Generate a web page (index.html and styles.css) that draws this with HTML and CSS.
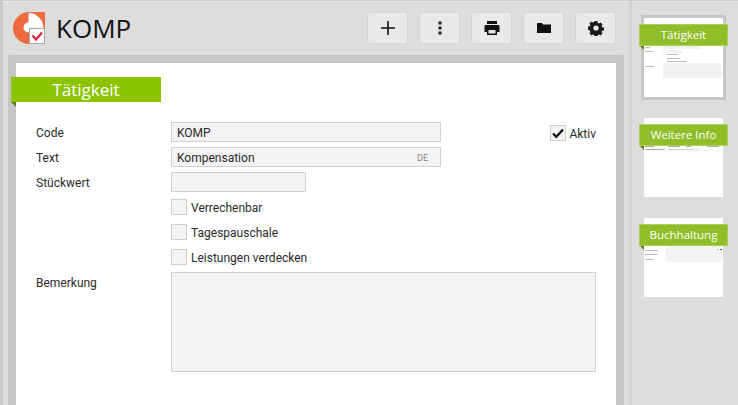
FILE: index.html
```html
<!DOCTYPE html>
<html lang="de">
<head>
<meta charset="utf-8">
<title>KOMP</title>
<link rel="stylesheet" href="styles.css">
</head>
<body>
<div class="app">
  <main class="main">
    <header class="head">
      <svg class="logo" width="33" height="33" viewBox="0 0 33 33">
        <path d="M16 0A16 16 0 1 0 32 16V0Z" fill="#ed6a3e"/>
        <path d="M15.500 1A15 15 0 0 1 30.500 16H20.500A5 5 0 0 0 15.500 11Z" fill="#fff"/>
        <circle cx="15.500" cy="15.500" r="5" fill="#fff"/>
        <rect x="16.500" y="16.500" width="15" height="15" fill="#fbfbfb" stroke="#a9a9a9"/>
        <path d="M19.500 23.500l3.500 4 6-7" fill="none" stroke="#d7263d" stroke-width="2.200"/>
      </svg>
      <h1 class="title">KOMP</h1>
      <div class="tools">
        <button class="tool" aria-label="Neu"><svg width="16" height="16" viewBox="0 0 16 16"><path d="M8 1v14M1 8h14" stroke="#111" stroke-width="1.600"/></svg></button>
        <button class="tool" aria-label="Mehr"><svg width="16" height="16" viewBox="0 0 16 16"><path d="M6.500 1.500h3v3h-3zM6.500 6.500h3v3h-3zM6.500 11.500h3v3h-3z" fill="#222"/></svg></button>
        <button class="tool" aria-label="Drucken"><svg width="16" height="16" viewBox="0 0 16 16"><path d="M3 1h10v3H3zM1.800 5h12.400a1.300 1.300 0 0 1 1.300 1.300V12H13v3H3v-3H.5V6.300A1.300 1.300 0 0 1 1.800 5zM4.500 10v3.500h7V10z" fill="#111" fill-rule="evenodd"/></svg></button>
        <button class="tool" aria-label="Ordner"><svg width="16" height="16" viewBox="0 0 16 16"><path d="M1 3h5l1 1.500h8V13H1z" fill="#111"/></svg></button>
        <button class="tool" aria-label="Einstellungen"><svg width="16" height="16" viewBox="0 0 16 16"><path fill-rule="evenodd" fill="#1a1a1a" d="M6.600 1h2.800l.4 1.900 1.100.5 1.700-1 2 2-1 1.700.5 1.100 1.900.4v2.800l-1.900.4-.5 1.100 1 1.700-2 2-1.700-1-1.100.5-.4 1.900H6.600l-.4-1.900-1.100-.5-1.700 1-2-2 1-1.700-.5-1.100L0 9.400V6.600l1.900-.4.500-1.100-1-1.700 2-2 1.700 1 1.100-.5zM8 5.400a2.600 2.600 0 1 0 0 5.200 2.600 2.600 0 0 0 0-5.200z"/></svg></button>
      </div>
    </header>
    <section class="panel">
      <div class="banner">Tätigkeit</div>
      <form class="form">
        <label class="lbl">Code</label>
        <div class="field">KOMP</div>
        <div class="active"><span class="box"><svg width="14" height="14" viewBox="0 0 14 14"><path d="M2 7.500l3.300 3.300L12 3.500" fill="none" stroke="#111" stroke-width="2.300"/></svg></span><span class="txt">Aktiv</span></div>
        <label class="lbl">Text</label>
        <div class="field field-lang"><span>Kompensation</span><span class="lang">DE</span></div>
        <span></span>
        <label class="lbl">Stückwert</label>
        <div class="field field-short"></div>
        <span></span>
        <div class="check"><span class="box"></span><span class="txt">Verrechenbar</span></div>
        <div class="check"><span class="box"></span><span class="txt">Tagespauschale</span></div>
        <div class="check"><span class="box"></span><span class="txt">Leistungen verdecken</span></div>
        <label class="lbl">Bemerkung</label>
        <div class="area"></div>
      </form>
    </section>
  </main>
  <aside class="side">
    <div class="thumb thumb-on">
      <div class="page">
        <svg width="79" height="79" viewBox="0 0 79 79"><path d="M1 29h5v1H1zM1 33h8v1H1zM1 48h9v1H1z" fill="#bbb"/><path d="M19 28h38v3H19zM19 32h19v3H19zM19 45h59v15H19z" fill="#f2f2f2"/><path d="M23 36h11v1H23zM23 40h13v1H23zM23 43h20v1H23z" fill="#bbb"/></svg>
      </div>
      <div class="tag">Tätigkeit</div>
    </div>
    <div class="thumb">
      <div class="page">
        <svg width="79" height="79" viewBox="0 0 79 79"><path d="M1 28h9v1H1zM24 28h12v1H24zM42 28h5v1h-5zM63 28h12v1H63zM1 31h20v1H1zM24 31h30v1H24z" fill="#aaa"/><path d="M23 30.500h55v3H23z" fill="#f2f2f2" opacity=".6"/></svg>
      </div>
      <div class="tag">Weitere Info</div>
    </div>
    <div class="thumb">
      <div class="page">
        <svg width="79" height="79" viewBox="0 0 79 79"><path d="M22 22h56v22H22z" fill="#f3f3f3"/><path d="M1 27h13v1H1zM1 32h13v1H1zM1 36h12v1H1zM1 41h9v1H1zM73 31h2v1h-2z" fill="#bbb"/><path d="M76 31h2v1h-2z" fill="#666"/></svg>
      </div>
      <div class="tag">Buchhaltung</div>
    </div>
  </aside>
</div>
</body>
</html>
```

FILE: styles.css
```css
* { box-sizing: border-box; }
html, body { margin: 0; height: 100%; overflow: hidden; }
body { background: #ddd; font-family: Roboto, "Open Sans", sans-serif; font-size: 12px; color: #2a2a2a; }
.app { display: flex; height: 405px; border-top: 1px solid #ccc; box-shadow: inset 0 1px 0 #e8e8e8; }
.main { width: 632px; border-left: 3px solid #c9c9c9; border-right: 3px solid #d3d3d3; padding-left: 5px; padding-right: 5px; display: flex; flex-direction: column; }
.head { height: 54px; flex: none; display: flex; align-items: flex-start; }
.logo { margin: 11px 0 0 5px; flex: none; }
.title { margin: 8px 0 0 10px; font-family: "Open Sans", sans-serif; font-weight: 400; font-size: 26px; line-height: 38px; color: #111; }
.tools { margin-left: auto; margin-right: 8px; margin-top: 11px; display: flex; gap: 11px; }
.tool { width: 41px; height: 32px; padding: 0; display: flex; align-items: center; justify-content: center; background: #e9e9e9; border: 1px solid #d5d5d5; border-radius: 4px; }
.panel { position: relative; flex: 1; background: #fff; border: 8px solid #c6c6c6; border-bottom: 0; border-radius: 3px 3px 0 0; }
.banner { position: absolute; left: -5px; top: 14px; width: 150px; height: 25px; background: #8cc400; color: #fff; font-family: "Open Sans", sans-serif; font-size: 17px; line-height: 25px; text-align: center; }
.banner::after { content: ""; position: absolute; left: 0; top: 25px; border-top: 5px solid #5f7d14; border-left: 5px solid transparent; }
.form { display: grid; grid-template-columns: 135px 270px 1fr; grid-auto-rows: 20px; row-gap: 5px; padding: 59px 20px 0 20px; line-height: 20px; }
.lbl { grid-column: 1; line-height: 22px; }
.field { grid-column: 2; background: #f3f3f3; border: 1px solid #d0d0d0; padding: 1px 5px 0; line-height: 18px; }
.field-lang { display: flex; justify-content: space-between; }
.lang { font-size: 9px; color: #888; padding-right: 7px; }
.field-short { width: 135px; }
.active { display: flex; align-items: center; gap: 3px; justify-content: flex-end; padding-top: 2px; }
.box { width: 16px; height: 16px; flex: none; display: flex; align-items: center; justify-content: center; background: #f3f3f3; border: 1px solid #d0d0d0; }
.check { grid-column: 2 / 4; display: flex; align-items: center; gap: 4px; }
.txt { padding-top: 2px; }
.area { grid-column: 2 / 4; height: 100px; background: #f3f3f3; border: 1px solid #d0d0d0; }
.side { flex: 1; padding: 14px 0 0 12px; display: flex; flex-direction: column; gap: 18px; }
.thumb { position: relative; width: 79px; height: 79px; margin-top: 3px; flex: none; }
.thumb-on { outline: 3px solid #c6c6c6; }
.page { width: 79px; height: 79px; background: #fff; }
.page svg { display: block; }
.tag { position: absolute; left: -5px; top: 6px; width: 89px; height: 22px; background: #8fbe29; border: 1px solid #a9cf5e; color: #fff; font-family: "Open Sans", sans-serif; font-size: 11.5px; line-height: 20px; text-align: center; }
.tag::after { content: ""; position: absolute; left: 0; top: 21px; border-top: 4px solid #5f7d14; border-left: 4px solid transparent; }
```
